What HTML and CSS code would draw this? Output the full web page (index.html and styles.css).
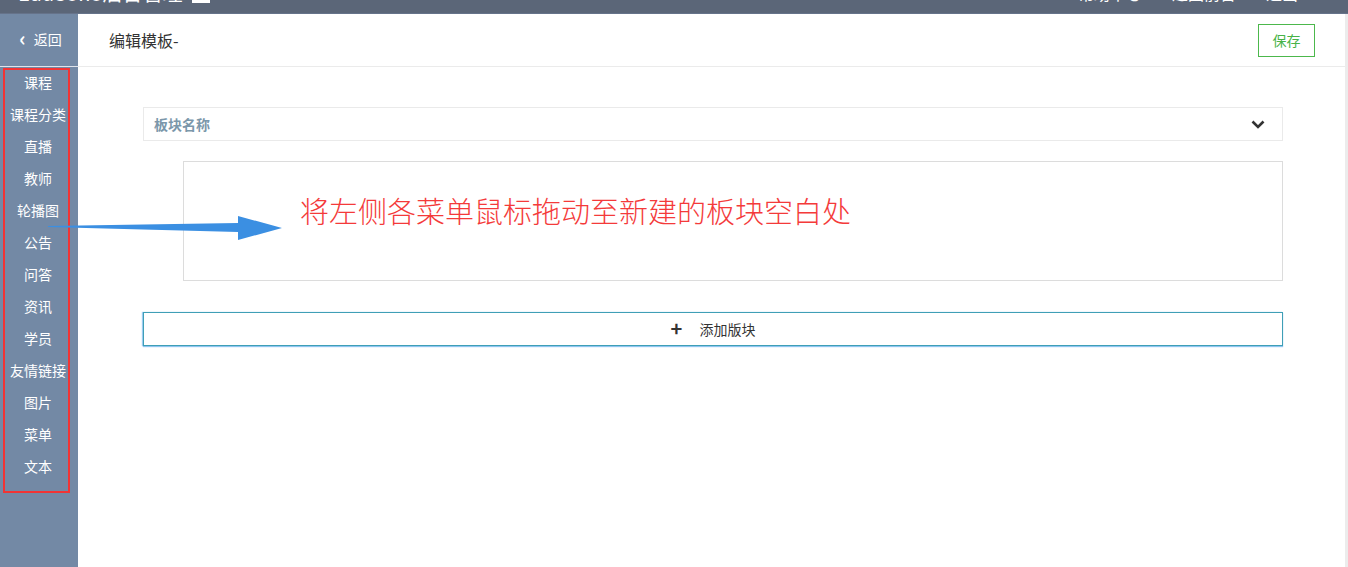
FILE: index.html
```html
<!DOCTYPE html>
<html lang="zh-CN">
<head>
<meta charset="utf-8">
<title>编辑模板</title>
<link rel="stylesheet" href="styles.css">
</head>
<body>
<div class="topbar">
  <div class="topbar-inner">
    <span class="brand">EduSoho后台管理 <span class="brand-mark"></span></span>
    <span class="top-links"><span>帮助中心</span><span>返回前台</span><span>退出</span></span>
  </div>
</div>
<div class="layout">
  <aside class="sidebar">
    <div class="back"><span class="back-arrow">&lsaquo;</span><span>返回</span></div>
    <ul class="menu">
      <li>课程</li>
      <li>课程分类</li>
      <li>直播</li>
      <li>教师</li>
      <li>轮播图</li>
      <li>公告</li>
      <li>问答</li>
      <li>资讯</li>
      <li>学员</li>
      <li>友情链接</li>
      <li>图片</li>
      <li>菜单</li>
      <li>文本</li>
    </ul>
  </aside>
  <main class="main">
    <header class="header">
      <h1 class="title">编辑模板-</h1>
      <button class="btn-save">保存</button>
    </header>
    <section class="content">
      <div class="panel-head">
        <span class="panel-title">板块名称</span>
        <svg class="chev" width="14" height="9" viewBox="0 0 14 9"><path d="M1.5 1.5 L7 7 L12.5 1.5" fill="none" stroke="#333" stroke-width="2.6"/></svg>
      </div>
      <div class="drop-area"></div>
      <button class="btn-add"><span class="plus">+</span><span>添加版块</span></button>
    </section>
  </main>
  <div class="scroll-strip"></div>
</div>
<div class="note-box"></div>
<svg class="note-arrow" width="240" height="30" viewBox="0 0 240 30"><polygon points="0,12 190,9 190,2 234,14 190,26 190,18 0,13" fill="#3b8fe2"/></svg>
<div class="note-text">将左侧各菜单鼠标拖动至新建的板块空白处</div>
</body>
</html>
```
FILE: styles.css
```css
* { box-sizing: border-box; }
html, body { margin: 0; padding: 0; }
body {
  width: 1348px;
  height: 567px;
  overflow: hidden;
  font-family: "Noto Sans CJK SC", "Noto Sans", sans-serif;
  font-size: 14px;
  color: #333;
  background: #fff;
  position: relative;
}
.topbar {
  height: 14px;
  background: #5b6678;
  overflow: hidden;
  border-bottom: 1px solid #66738a;
}
.topbar-inner {
  height: 40px;
  margin-top: -27px;
  display: flex;
  align-items: center;
  justify-content: space-between;
  padding: 0 50px 0 18px;
  color: #fff;
  font-size: 20px;
  line-height: 1;
}
.brand { display: flex; align-items: center; gap: 10px; }
.brand-mark { width: 18px; height: 20px; background: #fff; display: inline-block; }
.top-links { display: flex; gap: 30px; font-size: 16px; }
.layout {
  display: flex;
  height: 553px;
}
.sidebar {
  width: 78px;
  flex: none;
  background: #7389a5;
  color: #fff;
}
.back {
  height: 53px;
  border-bottom: 1px solid #dfe3ea;
  display: flex;
  align-items: center;
  justify-content: center;
  gap: 8px;
  font-size: 14px;
  padding: 0 0 2px 3px;
}
.back-arrow { font-size: 20px; font-weight: bold; line-height: 1; margin-top: -3px; }
.menu {
  list-style: none;
  margin: -1px 0 0;
  padding: 0 2px 0 0;
}
.menu li {
  height: 32px;
  line-height: 32px;
  text-align: center;
  white-space: nowrap;
  font-size: 14px;
}
.main {
  flex: 1;
  display: flex;
  flex-direction: column;
}
.header {
  height: 53px;
  border-bottom: 1px solid #ebebeb;
  display: flex;
  align-items: center;
  justify-content: space-between;
  padding: 0 30px 0 31px;
}
.title {
  margin: 0;
  font-size: 16px;
  font-weight: normal;
  color: #333;
}
.btn-save {
  width: 57px;
  height: 33px;
  border: 1px solid #4cb84c;
  background: #fff;
  color: #47b347;
  font-family: inherit;
  font-size: 14px;
  padding: 0;
}
.content {
  padding: 40px 0 0 65px;
  width: 1205px;
}
.panel-head {
  height: 34px;
  border: 1px solid #eaeaea;
  display: flex;
  align-items: center;
  justify-content: space-between;
  padding: 0 17px 0 10px;
}
.panel-title {
  font-weight: bold;
  color: #7b97aa;
  font-size: 14px;
}
.drop-area {
  margin: 20px 0 0 40px;
  height: 120px;
  border: 1px solid #dcdcdc;
}
.btn-add {
  margin-top: 31px;
  width: 100%;
  height: 34px;
  border: 1px solid #3f9fb6;
  background: #fff;
  box-shadow: 0 1px 1px rgba(102, 175, 233, 0.7), -1px 0 1px rgba(102, 175, 233, 0.6);
  display: flex;
  align-items: center;
  justify-content: center;
  gap: 17px;
  font-family: inherit;
  font-size: 14px;
  color: #333;
  padding: 0;
}
.plus {
  font-size: 20px;
  font-weight: bold;
  line-height: 1;
  margin-top: -2px;
}
.scroll-strip {
  width: 3px;
  flex: none;
  background: #ececec;
}
.note-box {
  position: absolute;
  left: 3px;
  top: 68px;
  width: 67px;
  height: 425px;
  border: 2px solid #f23434;
}
.note-arrow {
  position: absolute;
  left: 48px;
  top: 214px;
}
.note-text {
  position: absolute;
  left: 300px;
  top: 192px;
  font-size: 29px;
  line-height: 36px;
  color: #f43a3a;
  font-weight: 300;
  white-space: nowrap;
}
```
